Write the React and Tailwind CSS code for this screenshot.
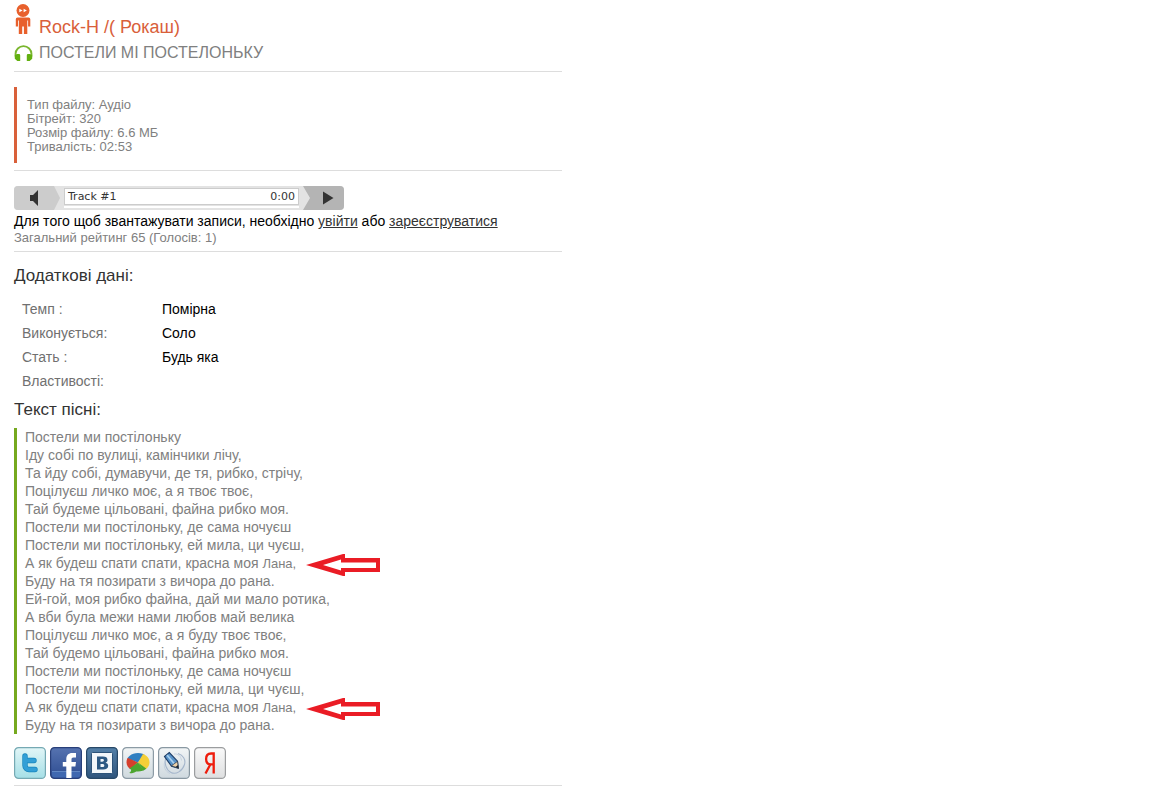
const fileInfo = ['Тип файлу: Аудіо', 'Бітрейт: 320', 'Розмір файлу: 6.6 МБ', 'Тривалість: 02:53'];

const details = [
  ['Темп :', 'Помірна'],
  ['Виконується:', 'Соло'],
  ['Стать :', 'Будь яка'],
  ['Властивості:', ''],
];

const lyrics = [
  'Постели ми постілоньку',
  'Іду собі по вулиці, камінчики лічу,',
  'Та йду собі, думавучи, де тя, рибко, стрічу,',
  'Поцілуєш личко моє, а я твоє твоє,',
  'Тай будеме цільовані, файна рибко моя.',
  'Постели ми постілоньку, де сама ночуєш',
  'Постели ми постілоньку, ей мила, ци чуєш,',
  { text: 'А як будеш спати спати, красна моя ', name: 'Лана,' },
  'Буду на тя позирати з вичора до рана.',
  'Ей-гой, моя рибко файна, дай ми мало ротика,',
  'А вби була межи нами любов май велика',
  'Поцілуєш личко моє, а я буду твоє твоє,',
  'Тай будемо цільовані, файна рибко моя.',
  'Постели ми постілоньку, де сама ночуєш',
  'Постели ми постілоньку, ей мила, ци чуєш,',
  { text: 'А як будеш спати спати, красна моя ', name: 'Лана,' },
  'Буду на тя позирати з вичора до рана.',
];

function PersonIcon() {
  return (
    <svg width="18" height="31" viewBox="0 0 18 31" aria-hidden="true">
      <circle cx="9" cy="6.500" r="6.500" fill="#e8602c" />
      <path d="M5.300 4.800 8.600 6.500 5.300 8.200zM9.600 4.800l3.300 1.700-3.300 1.700z" fill="#fff" />
      <path d="M3.500 13.500h11a1.800 1.800 0 0 1 1.800 1.800v7.200h-2.200v-6h-.8V30H9.900v-7.500H8.200V30H4.800V16.500H4v6H1.800v-7.200a1.800 1.800 0 0 1 1.700-1.800z" fill="#e8602c" />
    </svg>
  );
}

function HeadphonesIcon() {
  return (
    <svg width="19" height="17" viewBox="0 0 19 17" aria-hidden="true">
      <path d="M1.500 11.500V9a8 7.800 0 0 1 16 0v2.500" fill="none" stroke="#7ab62e" strokeWidth="1.800" />
      <path d="M2.800 9H5a1.200 1.200 0 0 1 1.200 1.200V16H3.300L.8 13.800V10.500zM16.200 9H14a1.200 1.200 0 0 0-1.200 1.200V16h2.900l2.500-2.200V10.500z" fill="#63b011" />
    </svg>
  );
}

function Arrow() {
  return (
    <svg className="absolute left-full top-0 ml-2.5" width="74" height="22" viewBox="0 0 74 22" aria-hidden="true">
      <path d="M0 11 37 0h2v4h35v14H39v4h-2z" fill="#ea1c25" />
      <path d="M17 11 35 5.500V8.500H70v5.500H35v2.500z" fill="#fff" />
    </svg>
  );
}

function Frame({ id, from, to, stroke, children }) {
  return (
    <svg width="32" height="32" viewBox="0 0 32 32" aria-hidden="true">
      <defs>
        <linearGradient id={id} x1="0" y1="0" x2="0" y2="1">
          <stop offset="0" stopColor={from} />
          <stop offset="1" stopColor={to} />
        </linearGradient>
      </defs>
      <rect x=".6" y=".6" width="30.800" height="30.800" rx="4" fill={`url(#${id})`} stroke={stroke} strokeWidth="1.200" />
      {children}
    </svg>
  );
}

const shares = [
  {
    label: 'Twitter',
    icon: (
      <Frame id="tw" from="#e2f6f7" to="#a5dfe6" stroke="#75a9b3">
        <path d="M11 9v9.500a4 4 0 0 0 4 4h6M11 13.500h9" fill="none" stroke="#1685bd" strokeWidth="5.400" strokeLinecap="round" />
        <path d="M11 9v9.500a4 4 0 0 0 4 4h6M11 13.500h9" fill="none" stroke="#329fd6" strokeWidth="4" strokeLinecap="round" />
      </Frame>
    ),
  },
  {
    label: 'Facebook',
    icon: (
      <Frame id="fb" from="#5673b0" to="#2d4c91" stroke="#283f79">
        <path d="M2 24.500h28V28a2.500 2.500 0 0 1-2.500 2.500h-23A2.500 2.500 0 0 1 2 28z" fill="#4068b0" />
        <path d="M2 24.500h28" stroke="#6288c4" strokeWidth="1" />
        <path d="M16.300 31V19.500H12.800V15h3.500v-2.800c0-4 2.300-6.200 5.900-6.200h3.800v4.500h-2.500c-1.500 0-2 .7-2 2V15h4.500l-.6 4.500h-3.900V31z" fill="#fff" />
      </Frame>
    ),
  },
  {
    label: 'ВКонтакте',
    icon: (
      <Frame id="vk" from="#5480a8" to="#2f557d" stroke="#274867">
        <rect x="5.500" y="5.500" width="21" height="21" rx="1" fill="#f3f7fa" stroke="#2d5379" />
        <path d="M11 9.500h5.800c3.200 0 4.700 1.200 4.700 3.400 0 1.400-.7 2.300-2 2.800 1.800.4 2.700 1.500 2.700 3.100 0 2.500-1.800 3.700-5 3.700H11zM14.500 12v2.700h1.600c1.200 0 1.800-.4 1.800-1.400 0-.9-.6-1.300-1.800-1.300zM14.500 17v3h1.800c1.400 0 2-.5 2-1.500s-.6-1.500-2-1.500z" fill="#2d5983" fillRule="evenodd" />
      </Frame>
    ),
  },
  {
    label: 'Google Buzz',
    icon: (
      <Frame id="gb" from="#f2f5f6" to="#cfd9de" stroke="#8c9ba5">
        <clipPath id="bubble">
          <path d="M16 6c6.500 0 11.500 4 11.500 9.200S22.500 24.500 16 24.500c-.6 0-1.200 0-1.800-.1-1.800 1.300-4 1.900-7.200 1.700 1.400-.8 2.100-2 2.200-3.400C6.200 21 4.500 18.200 4.500 15.200 4.500 10 9.500 6 16 6z" />
        </clipPath>
        <g clipPath="url(#bubble)">
          <path d="M4 11V5h19l-1 3-6 7.500z" fill="#2f7fc1" />
          <path d="M21 7 29 4v14l-4.500 5L16 15.500z" fill="#f4cf38" />
          <path d="M3 10.500h2L16 15.500 7.500 23H3z" fill="#d5402d" />
          <path d="m16 15.500 7 9.500L4 28v-4z" fill="#4ba52f" />
          <path d="m16 15.500 9.500 7-3 3z" fill="#4ba52f" />
        </g>
      </Frame>
    ),
  },
  {
    label: 'LiveJournal',
    icon: (
      <Frame id="lj" from="#f2f5f6" to="#cfd9df" stroke="#8998a2">
        <path d="M8 10.500C6 16 8 23 13 25.500c5 2.500 11.500-1.500 13.500-8C28 12.500 25 8 20 6.500" fill="none" stroke="#a5b6cb" strokeWidth="1.100" />
        <path d="M7 14c-2 5 0 10.500 5 12.500M16 7c4-.5 7 2 7.500 6.500" fill="none" stroke="#bdcadb" strokeWidth=".8" />
        <path d="m6.500 9.500 4.800-4 8.200 8.700.8 7-6.800-2z" fill="#5792c8" stroke="#1d3d66" strokeWidth="1.100" />
        <path d="m9 8 7.500 9" stroke="#a7d0ef" strokeWidth="1.700" />
        <path d="m13.500 18.700 6-4.300.9 6.800z" fill="#edd2a8" stroke="#27364a" strokeWidth=".7" />
        <path d="m17.500 20 2.500-1.900.5 3.100z" fill="#18212d" />
      </Frame>
    ),
  },
  {
    label: 'Яндекс',
    icon: (
      <Frame id="ya" from="#fafafa" to="#dedfe0" stroke="#9b9d9f">
        <path d="M19.700 26.500V6.500h-2.600c-3 0-5 2-5 5.500s1.800 5.400 4.800 5.400h2.800M16.300 17.500l-4.800 9" fill="none" stroke="#ee1c0c" strokeWidth="2.300" />
      </Frame>
    ),
  },
];

function Player() {
  return (
    <div className="mt-[15px] flex h-6 max-w-[330px] overflow-hidden rounded bg-[#e3e3e3]">
      <button type="button" aria-label="Гучність" className="w-[46px] shrink-0">
        <svg width="46" height="24" viewBox="0 0 46 24" aria-hidden="true">
          <path d="M0 0h40l6 12-6 12H0z" fill="#cccccc" />
          <path d="M16 9h3l5-5v16l-5-5h-3z" fill="#333" />
        </svg>
      </button>
      <div className="ml-1 mt-0.5 min-w-0 flex-1">
        <div className="flex h-[17px] items-center justify-between border border-[#cccccc] bg-white px-[3px] font-['DejaVu_Sans'] text-[11px] leading-none text-[#333]">
          <span>Track #1</span>
          <span>0:00</span>
        </div>
        <div className="mt-px h-0.5 bg-white" />
      </div>
      <button type="button" aria-label="Відтворити" className="ml-1 w-[41px] shrink-0">
        <svg width="41" height="24" viewBox="0 0 41 24" aria-hidden="true">
          <path d="M0 0h41v24H0l7-12z" fill="#b4b4b4" />
          <path d="M20 5.500 30.500 12 20 18.500z" fill="#333" />
        </svg>
      </button>
    </div>
  );
}

export default function App() {
  return (
    <main className="max-w-[576px] bg-white px-3.5 pt-1 pb-5 font-['Liberation_Sans',Arial,sans-serif] text-sm text-black">
      <header className="border-b border-[#dddddd] pb-2">
        <h1 className="flex items-start gap-[7px] text-lg leading-5 text-[#d9603a]">
          <PersonIcon />
          <a href="#artist" className="mt-[13px]">Rock-H /( Рокаш)</a>
        </h1>
        <h2 className="mt-1.5 flex items-center gap-1.5 text-base leading-5 text-[#808080]">
          <HeadphonesIcon />
          ПОСТЕЛИ МІ ПОСТЕЛОНЬКУ
        </h2>
      </header>

      <section className="border-b border-[#dddddd] pt-[15px] pb-[7px]">
        <div className="border-l-3 border-[#d9603a] pt-[11px] pb-[9px] pl-2.5 text-[13px] leading-[14px] text-[#808080]">
          {fileInfo.map((line) => (
            <p key={line}>{line}</p>
          ))}
        </div>
      </section>

      <section className="border-b border-[#dddddd] pb-[5px]">
        <Player />
        <p className="mt-0.5 leading-[18px]">
          Для того щоб звантажувати записи, необхідно{' '}
          <a href="#login" className="text-[#333] underline">увійти</a> або{' '}
          <a href="#register" className="text-[#333] underline">зареєструватися</a>
        </p>
        <p className="text-[13px] leading-4 text-[#808080]">Загальний рейтинг 65 (Голосів: 1)</p>
      </section>

      <section className="border-b border-[#dddddd] pb-1.5">
        <h3 className="mt-3.5 text-[17px] leading-5 text-[#333]">Додаткові дані:</h3>
        <table className="mt-[11px] ml-2">
          <tbody>
            {details.map(([name, value]) => (
              <tr key={name} className="h-6">
                <th scope="row" className="w-[140px] text-left font-normal text-[#707070]">{name}</th>
                <td>{value}</td>
              </tr>
            ))}
          </tbody>
        </table>
        <h3 className="mt-[7px] text-[17px] leading-5 text-[#333]">Текст пісні:</h3>
        <div className="mt-2 border-l-3 border-[#76a91f] pl-2 leading-[18px] text-[#808080]">
          {lyrics.map((line, i) =>
            typeof line === 'string' ? (
              <p key={i}>{line}</p>
            ) : (
              <p key={i} className="relative h-[18px] w-fit">
                {line.text}
                <span className="text-[13px]">{line.name}</span>
                <Arrow />
              </p>
            ),
          )}
        </div>
        <nav className="mt-[13px] flex gap-1" aria-label="Поділитися">
          {shares.map((share) => (
            <a key={share.label} href="#share" aria-label={share.label}>
              {share.icon}
            </a>
          ))}
        </nav>
      </section>
    </main>
  );
}
